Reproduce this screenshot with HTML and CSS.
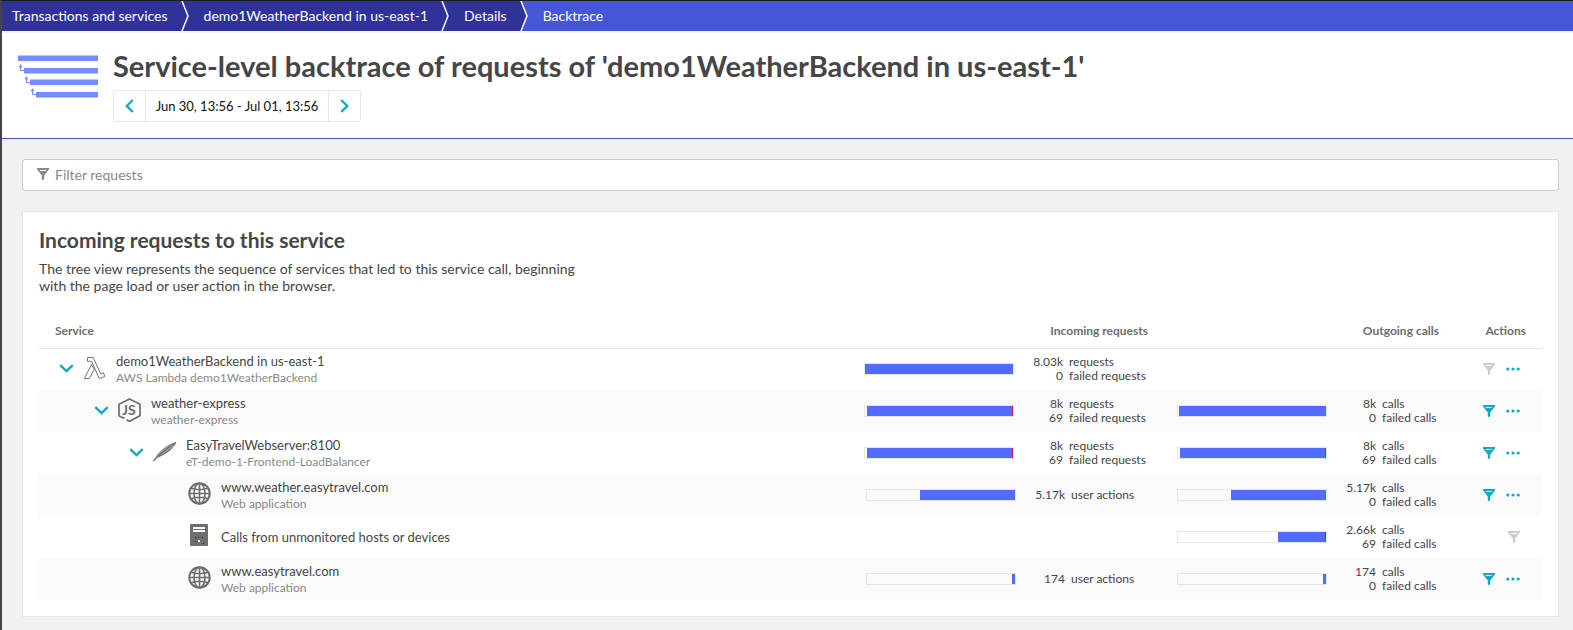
FILE: index.html
```html
<!DOCTYPE html>
<html lang="en">
<head>
    <meta charset="UTF-8">
    <meta name="viewport" content="width=device-width, initial-scale=1.0">
    <title>Service-level backtrace</title>
    <link rel="stylesheet" href="styles.css">
</head>
<body>
    <!-- shared icons -->
    <svg class="sprite" aria-hidden="true">
        <symbol id="icon-filter" viewBox="0 0 12 12">
            <path fill="currentColor" fill-rule="evenodd" d="M0 0h12v1.4L7.2 7.4v3.2L6.6 12H5.4l-.6-1.4V7.4L0 1.4zM2.6 2l.6 1h5.6l.6-1z"/>
        </symbol>
        <symbol id="icon-down" viewBox="0 0 14 9">
            <path fill="none" stroke="currentColor" stroke-width="2.4" d="M.8 1.2L7 7.2l6.2-6"/>
        </symbol>
        <symbol id="icon-dots" viewBox="0 0 14 4">
            <g fill="currentColor"><circle cx="1.8" cy="2" r="1.6"/><circle cx="7" cy="2" r="1.6"/><circle cx="12.2" cy="2" r="1.6"/></g>
        </symbol>
        <symbol id="icon-globe" viewBox="0 0 24 24">
            <g fill="none" stroke="currentColor" stroke-width="1.6">
                <circle cx="11.5" cy="11.5" r="10.2" stroke-width="2"/>
                <ellipse cx="11.5" cy="11.5" rx="5.5" ry="10.2"/>
                <path d="M11.5 1.3v20.4M1.3 11.5h20.4M3 6.3Q11.5 9.1 20 6.3M3 16.7Q11.5 13.9 20 16.7"/>
            </g>
        </symbol>
    </svg>

    <nav class="breadcrumb">
        <a href="#">Transactions and services</a>
        <svg class="separator" viewBox="0 0 8 30"><path d="M0 0h8v30H0z" fill="#2f3299"/><path d="M1 0l6 15-6 15" fill="none" stroke="#fff" stroke-width="1.5"/></svg>
        <a href="#">demo1WeatherBackend in us-east-1</a>
        <svg class="separator" viewBox="0 0 8 30"><path d="M0 0h8v30H0z" fill="#2f3299"/><path d="M1 0l6 15-6 15" fill="none" stroke="#fff" stroke-width="1.5"/></svg>
        <a href="#">Details</a>
        <svg class="separator" viewBox="0 0 8 30"><path d="M0 0h1l6 15-6 15H0z" fill="#2f3299"/><path d="M1 0l6 15-6 15" fill="none" stroke="#fff" stroke-width="1.5"/></svg>
        <a href="#" class="current">Backtrace</a>
    </nav>

    <header class="page-header">
        <svg class="backtrace-icon" viewBox="0 0 80 44">
            <path fill="#748cff" d="M0 1h80v5H0zM6 13h74v5H6zM12 25h68v5H12zM18 37h62v5H18z"/>
            <path fill="#b9c5ff" d="M0 0h80v1H0zM6 18h74v1H6zM12 24h68v1H12zM18 42h62v1H18z"/>
            <path fill="none" stroke="#748cff" d="M2.5 11v4.5H6M8.5 23v4.5H12M14.5 35v4.5H18"/>
            <path fill="#748cff" d="M2.5 9l2 3.5h-4zM8.5 21l2 3.5h-4zM14.5 33l2 3.5h-4z"/>
        </svg>
        <div>
            <h1>Service-level backtrace of requests of 'demo1WeatherBackend in us-east-1'</h1>
            <div class="timeframe">
                <button type="button" aria-label="Previous timeframe"><svg viewBox="0 0 9 14"><path d="M7.8 1L1.8 7l6 6"/></svg></button>
                <button type="button" class="range">Jun 30, 13:56 - Jul 01, 13:56</button>
                <button type="button" aria-label="Next timeframe"><svg viewBox="0 0 9 14"><path d="M1.2 1l6 6-6 6"/></svg></button>
            </div>
        </div>
    </header>

    <main>
        <div class="filter-bar">
            <svg class="filter-icon"><use href="#icon-filter"/></svg>
            <input type="text" placeholder="Filter requests" aria-label="Filter requests">
        </div>

        <section class="card">
            <h2>Incoming requests to this service</h2>
            <p>The tree view represents the sequence of services that led to this service call, beginning with the page load or user action in the browser.</p>

            <table>
                <colgroup>
                    <col>
                    <col class="col-incoming">
                    <col class="col-outgoing">
                    <col class="col-actions">
                </colgroup>
                <thead>
                    <tr>
                        <th>Service</th>
                        <th>Incoming requests</th>
                        <th>Outgoing calls</th>
                        <th>Actions</th>
                    </tr>
                </thead>
                <tbody>
                    <tr>
                        <td>
                            <div class="service level-0">
                                <button type="button" class="toggle" aria-label="Collapse"><svg><use href="#icon-down"/></svg></button>
                                <svg class="type" viewBox="0 0 24 24"><path fill="#fff" stroke="#737373" d="M4.5 1.5h5.7l7.5 16.2 2.8-1 1.3 3.8-5.6 2L8.6 5.3H4.5zM8.6 8.5L1.3 22.5h5l4.9-9z"/></svg>
                                <div><div class="name">demo1WeatherBackend in us-east-1</div><div class="detail">AWS Lambda demo1WeatherBackend</div></div>
                            </div>
                        </td>
                        <td>
                            <div class="metric">
                                <div class="bar"><span class="ok" style="width: 100%"></span></div>
                                <div class="numbers"><b>8.03k</b><span>requests</span><b>0</b><span>failed requests</span></div>
                            </div>
                        </td>
                        <td></td>
                        <td>
                            <div class="actions">
                                <button type="button" aria-label="Filter" disabled><svg class="filter-icon"><use href="#icon-filter"/></svg></button>
                                <button type="button" aria-label="More"><svg class="dots"><use href="#icon-dots"/></svg></button>
                            </div>
                        </td>
                    </tr>
                    <tr>
                        <td>
                            <div class="service level-1">
                                <button type="button" class="toggle" aria-label="Collapse"><svg><use href="#icon-down"/></svg></button>
                                <svg class="type" viewBox="0 0 24 24">
                                    <path fill="none" stroke="#706c71" stroke-width="1.7" stroke-linejoin="round" d="M6.5 19.4L5 20 1 17.8V6.2L11.500.9 22 6.200v11.600L11.500 23.300 8.500 21.700"/>
                                    <text x="4" y="17" class="js">JS</text>
                                </svg>
                                <div><div class="name">weather-express</div><div class="detail">weather-express</div></div>
                            </div>
                        </td>
                        <td>
                            <div class="metric">
                                <div class="bar"><span class="ok" style="width: 98%"></span><span class="failed"></span></div>
                                <div class="numbers"><b>8k</b><span>requests</span><b>69</b><span>failed requests</span></div>
                            </div>
                        </td>
                        <td>
                            <div class="metric">
                                <div class="bar"><span class="ok" style="width: 99%"></span></div>
                                <div class="numbers"><b>8k</b><span>calls</span><b>0</b><span>failed calls</span></div>
                            </div>
                        </td>
                        <td>
                            <div class="actions">
                                <button type="button" aria-label="Filter"><svg class="filter-icon"><use href="#icon-filter"/></svg></button>
                                <button type="button" aria-label="More"><svg class="dots"><use href="#icon-dots"/></svg></button>
                            </div>
                        </td>
                    </tr>
                    <tr>
                        <td>
                            <div class="service level-2">
                                <button type="button" class="toggle" aria-label="Collapse"><svg><use href="#icon-down"/></svg></button>
                                <svg class="type" viewBox="0 0 24 24">
                                    <path fill="#9a969b" d="M23.3 2c.3 1.700-1.300 3.800-4 6.300-3.600 3.300-8.300 6.400-13.500 8.700L.6 21.700l-.6-.8 2.300-3.200C4 13.500 9.500 8.500 14.500 5.400 17.800 3.500 21 2.500 23.300 2z"/>
                                    <path fill="none" stroke="#605c61" d="M.5 20.500C7 14 14 8 22.800 2.600M6 16.600c5-2.100 9-5 12.500-8"/>
                                </svg>
                                <div><div class="name">EasyTravelWebserver:8100</div><div class="detail">eT-demo-1-Frontend-LoadBalancer</div></div>
                            </div>
                        </td>
                        <td>
                            <div class="metric">
                                <div class="bar"><span class="ok" style="width: 98%"></span><span class="failed"></span></div>
                                <div class="numbers"><b>8k</b><span>requests</span><b>69</b><span>failed requests</span></div>
                            </div>
                        </td>
                        <td>
                            <div class="metric">
                                <div class="bar"><span class="ok" style="width: 98%"></span><span class="failed"></span></div>
                                <div class="numbers"><b>8k</b><span>calls</span><b>69</b><span>failed calls</span></div>
                            </div>
                        </td>
                        <td>
                            <div class="actions">
                                <button type="button" aria-label="Filter"><svg class="filter-icon"><use href="#icon-filter"/></svg></button>
                                <button type="button" aria-label="More"><svg class="dots"><use href="#icon-dots"/></svg></button>
                            </div>
                        </td>
                    </tr>
                    <tr>
                        <td>
                            <div class="service leaf">
                                <svg class="type"><use href="#icon-globe"/></svg>
                                <div><div class="name">www.weather.easytravel.com</div><div class="detail">Web application</div></div>
                            </div>
                        </td>
                        <td>
                            <div class="metric user">
                                <div class="bar"><span class="ok" style="width: 64%"></span></div>
                                <div class="numbers"><b>5.17k</b><span>user actions</span></div>
                            </div>
                        </td>
                        <td>
                            <div class="metric">
                                <div class="bar"><span class="ok" style="width: 64%"></span></div>
                                <div class="numbers"><b>5.17k</b><span>calls</span><b>0</b><span>failed calls</span></div>
                            </div>
                        </td>
                        <td>
                            <div class="actions">
                                <button type="button" aria-label="Filter"><svg class="filter-icon"><use href="#icon-filter"/></svg></button>
                                <button type="button" aria-label="More"><svg class="dots"><use href="#icon-dots"/></svg></button>
                            </div>
                        </td>
                    </tr>
                    <tr>
                        <td>
                            <div class="service leaf">
                                <svg class="type" viewBox="0 0 24 24">
                                    <rect x="2" y="0" width="18" height="22" rx="1" fill="#706c71"/>
                                    <path fill="#fff" d="M5 3h12v2H5zM5 6h12v2H5zM10 16h2v2h-2z"/>
                                    <path fill="#2b292b" d="M7 13h1v1H7zM10 13h1v1h-1zM14 13h1v1h-1zM7 17h1v1H7zM15 19h1v1h-1z"/>
                                </svg>
                                <div class="name">Calls from unmonitored hosts or devices</div>
                            </div>
                        </td>
                        <td></td>
                        <td>
                            <div class="metric">
                                <div class="bar"><span class="ok" style="width: 32%"></span><span class="failed"></span></div>
                                <div class="numbers"><b>2.66k</b><span>calls</span><b>69</b><span>failed calls</span></div>
                            </div>
                        </td>
                        <td>
                            <div class="actions">
                                <button type="button" aria-label="Filter" disabled><svg class="filter-icon"><use href="#icon-filter"/></svg></button>
                            </div>
                        </td>
                    </tr>
                    <tr>
                        <td>
                            <div class="service leaf">
                                <svg class="type"><use href="#icon-globe"/></svg>
                                <div><div class="name">www.easytravel.com</div><div class="detail">Web application</div></div>
                            </div>
                        </td>
                        <td>
                            <div class="metric user">
                                <div class="bar"><span class="ok" style="width: 2%"></span></div>
                                <div class="numbers"><b>174</b><span>user actions</span></div>
                            </div>
                        </td>
                        <td>
                            <div class="metric">
                                <div class="bar"><span class="ok" style="width: 2%"></span></div>
                                <div class="numbers"><b>174</b><span>calls</span><b>0</b><span>failed calls</span></div>
                            </div>
                        </td>
                        <td>
                            <div class="actions">
                                <button type="button" aria-label="Filter"><svg class="filter-icon"><use href="#icon-filter"/></svg></button>
                                <button type="button" aria-label="More"><svg class="dots"><use href="#icon-dots"/></svg></button>
                            </div>
                        </td>
                    </tr>
                </tbody>
            </table>
        </section>
    </main>
</body>
</html>
```
FILE: styles.css
```css
* {
    box-sizing: border-box;
}

body {
    margin: 0;
    min-height: 100vh;
    border-top: 1px solid #1c1a1c;
    border-left: 2px solid #454545;
    background-color: #f1f1f1;
    font-family: Lato, "Noto Sans", sans-serif;
    font-size: 14px;
    color: #454646;
}

button {
    padding: 0;
    border: none;
    background: none;
    font: inherit;
    color: inherit;
    cursor: pointer;
}

svg {
    display: block;
    flex: none;
}

.sprite {
    position: absolute;
    width: 0;
    height: 0;
}

/* Breadcrumb */
.breadcrumb {
    display: flex;
    height: 30px;
    background-color: #4556d7;
}

.breadcrumb a {
    padding: 0 13px 0 15px;
    line-height: 30px;
    background-color: #2f3299;
    color: #fff;
    text-decoration: none;
}

.breadcrumb a:first-child {
    padding-left: 10px;
}

.breadcrumb a.current {
    background-color: #4556d7;
}

.separator {
    width: 8px;
    height: 30px;
}

/* Header */
.page-header {
    display: flex;
    gap: 15px;
    padding: 17px 16px 16px;
    border-top: 2px solid #f5f5f5;
    border-bottom: 1px solid #4556d7;
    background-color: #fff;
}

.backtrace-icon {
    width: 80px;
    height: 44px;
    margin-top: 5px;
}

h1 {
    margin: 0 0 8px;
    font-size: 29px;
    line-height: 32px;
    font-weight: bold;
}

.timeframe {
    display: inline-flex;
    height: 32px;
    border: 1px solid #e6e6e6;
    border-radius: 3px;
}

.timeframe button {
    display: flex;
    align-items: center;
    justify-content: center;
    width: 31px;
}

.timeframe .range {
    width: 184px;
    border: solid #e6e6e6;
    border-width: 0 1px;
    font-size: 13px;
    color: #111;
}

.timeframe svg {
    width: 9px;
    height: 14px;
    fill: none;
    stroke: #14a8bb;
    stroke-width: 2.4;
}

/* Content */
main {
    padding: 20px 14px 14px 20px;
}

.filter-bar {
    display: flex;
    align-items: center;
    gap: 6px;
    height: 32px;
    margin-bottom: 20px;
    padding: 0 14px 2px;
    border: 1px solid #ccc;
    border-radius: 3px;
    background-color: #fff;
    color: #898989;
}

.filter-bar input {
    flex: 1;
    padding: 0;
    border: none;
    outline: none;
    font: inherit;
}

.filter-bar input::placeholder {
    color: #898989;
}

.filter-icon {
    width: 12px;
    height: 12px;
}

.card {
    padding: 16px;
    border: 1px solid #e6e6e6;
    background-color: #fff;
}

h2 {
    margin: 0 0 8px;
    font-size: 21px;
    line-height: 24px;
}

p {
    max-width: 555px;
    margin: 0 0 20px;
    line-height: 17px;
}

table {
    width: 100%;
    table-layout: fixed;
    border-collapse: collapse;
}

.col-incoming {
    width: 313px;
}

.col-outgoing {
    width: 294px;
}

.col-actions {
    width: 87px;
}

th {
    height: 34px;
    padding: 0 16px 0 0;
    border-bottom: 1px solid #e6e6e6;
    font-size: 12px;
    text-align: right;
    color: #6d6d6d;
}

th:first-child {
    padding-left: 16px;
    text-align: left;
}

th:nth-child(2) {
    padding-right: 13px;
}

td {
    height: 42px;
    padding: 0 0 0 16px;
}

td:first-child {
    padding: 0;
}

tbody tr:nth-child(even) {
    background-color: #fafafa;
}

.service {
    display: flex;
    align-items: center;
    gap: 9px;
    padding-left: 20px;
}

.level-1 {
    padding-left: 55px;
}

.level-2 {
    padding-left: 90px;
}

.leaf {
    padding-left: 149px;
}

.toggle {
    margin-bottom: 2px;
}

.toggle svg {
    width: 15px;
    height: 9px;
    color: #14a8bb;
}

.type {
    width: 24px;
    height: 24px;
    margin-bottom: 3px;
    color: #706c71;
}

.js {
    font: bold 14px Lato, sans-serif;
    fill: #706c71;
}

.name {
    font-size: 13px;
    line-height: 17px;
}

.detail {
    font-size: 12px;
    line-height: 16px;
    color: #898989;
}

.metric {
    display: flex;
    align-items: center;
}

.bar {
    display: flex;
    justify-content: flex-end;
    width: 150px;
    height: 12px;
    border: 1px solid #e6e6e6;
}

.ok {
    background-color: #526cff;
}

.failed {
    width: 1px;
    background-color: #dc172a;
}

.numbers {
    display: grid;
    grid-template-columns: 49px auto;
    column-gap: 6px;
    font-size: 12px;
    line-height: 14px;
}

.numbers b {
    font-weight: normal;
    text-align: right;
}

.user {
    padding-left: 2px;
}

.actions {
    display: flex;
    justify-content: flex-end;
    align-items: center;
    gap: 11px;
    padding-right: 22px;
    color: #14a8bb;
}

.actions button:disabled {
    color: #ccc;
}

.dots {
    width: 14px;
    height: 4px;
}
```
